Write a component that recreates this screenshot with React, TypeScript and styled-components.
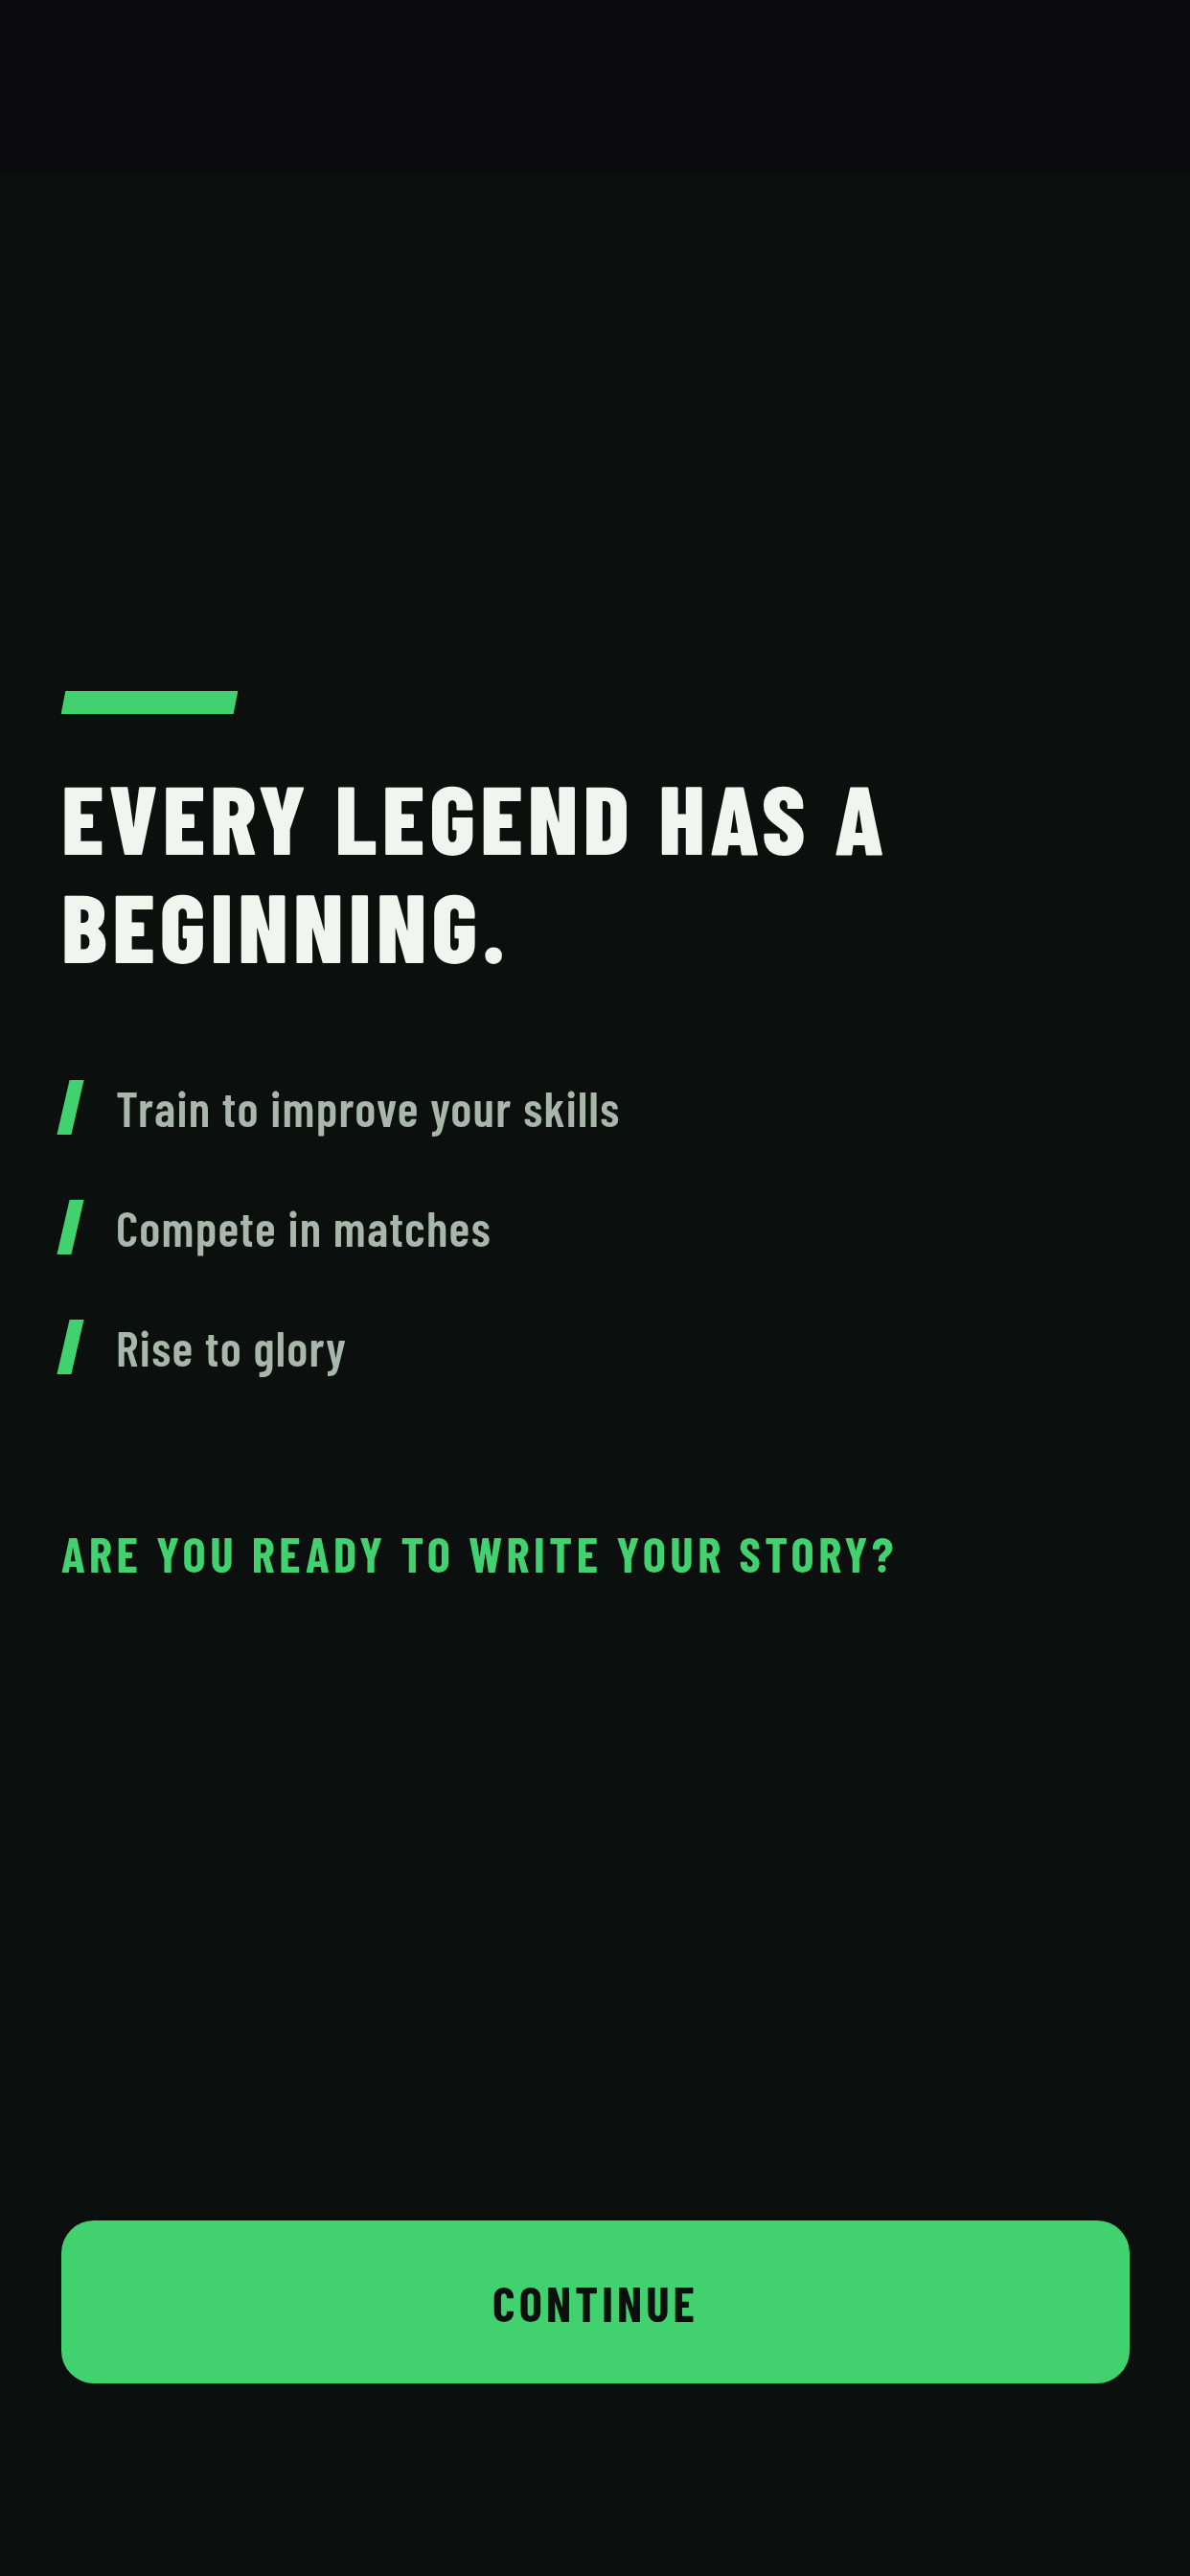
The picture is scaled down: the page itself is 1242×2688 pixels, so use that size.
import React from "react";
import styled, { createGlobalStyle } from "styled-components";

const GlobalStyle = createGlobalStyle`
  html, body {
    margin: 0;
    padding: 0;
    background: #0b0f0e;
  }
  #root {
    min-height: 100vh;
  }
  * { box-sizing: border-box; }
`;

const FONT = `"Barlow Condensed", "Roboto Condensed", "Liberation Sans", sans-serif`;
const GREEN = "#41d16f";

const Screen = styled.div`
  display: flex;
  flex-direction: column;
  min-height: 2688px;
  background: #0b0f0e;
  font-family: ${FONT};
`;

const StatusBar = styled.div`
  height: 180px;
  flex-shrink: 0;
  background: #0a0a0f;
`;

const Main = styled.main`
  flex: 1;
  display: flex;
  flex-direction: column;
  padding: 541px 63px 201px 64px;
`;

const AccentBar = styled.div`
  width: 180px;
  height: 24px;
  margin-left: 2px;
  background: ${GREEN};
  transform: skewX(-11deg);
`;

const Heading = styled.h1`
  margin: 50px 0 0;
  font-family: ${FONT};
  font-weight: 800;
  font-size: 101px;
  line-height: 113px;
  letter-spacing: 0.05em;
  color: #f2f4ef;
  text-transform: uppercase;
`;

const List = styled.ul`
  list-style: none;
  margin: 106px 0 0;
  padding: 0;
  display: flex;
  flex-direction: column;
  gap: 68px;
`;

const Item = styled.li`
  display: flex;
  align-items: center;
  gap: 40px;
  height: 57px;
`;

const Slash = styled.span`
  display: block;
  width: 15px;
  height: 57px;
  margin-left: 2px;
  background: ${GREEN};
  transform: skewX(-13deg);
  flex-shrink: 0;
`;

const ItemText = styled.span`
  font-family: ${FONT};
  font-weight: 600;
  font-size: 51px;
  line-height: 57px;
  letter-spacing: 0.025em;
  color: #a9b6ab;
`;

const Question = styled.p`
  margin: 156px 0 0;
  font-family: ${FONT};
  font-weight: 700;
  font-size: 51px;
  line-height: 61px;
  letter-spacing: 0.088em;
  color: ${GREEN};
  text-transform: uppercase;
`;

const Spacer = styled.div`
  flex: 1;
`;

const ContinueButton = styled.button`
  display: flex;
  align-items: center;
  justify-content: center;
  width: 100%;
  height: 170px;
  border: none;
  border-radius: 34px;
  background: ${GREEN};
  color: #0b0f0e;
  font-family: ${FONT};
  font-weight: 700;
  font-size: 51px;
  letter-spacing: 0.08em;
  text-transform: uppercase;
  cursor: pointer;
`;

const points = ["Train to improve your skills", "Compete in matches", "Rise to glory"];

export default function App() {
  return (
    <>
      <GlobalStyle />
      <Screen>
        <StatusBar />
        <Main>
          <AccentBar />
          <Heading>
            Every legend has a
            <br />
            beginning.
          </Heading>
          <List>
            {points.map((p) => (
              <Item key={p}>
                <Slash />
                <ItemText>{p}</ItemText>
              </Item>
            ))}
          </List>
          <Question>Are you ready to write your story?</Question>
          <Spacer />
          <ContinueButton>Continue</ContinueButton>
        </Main>
      </Screen>
    </>
  );
}
